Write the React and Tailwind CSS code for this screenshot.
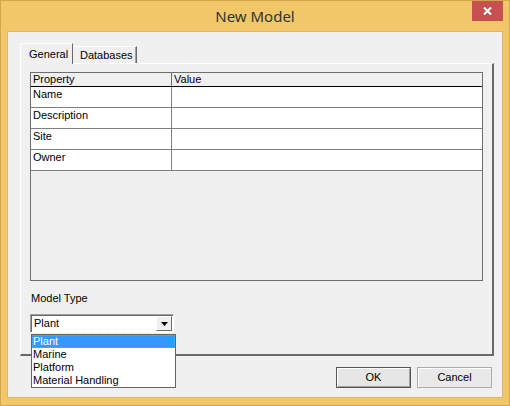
import React from "react";

const rows = ["Name", "Description", "Site", "Owner"];
const options = ["Plant", "Marine", "Platform", "Material Handling"];

const App = () => {
  return (
    <div className="w-[510px] h-[406px] bg-[#F0C86A] border border-[#D2A64E] flex flex-col font-['Liberation_Sans',Arial,sans-serif] text-[11px] leading-[13px] text-black">
      {/* title bar */}
      <div className="relative h-[30px] flex items-center justify-center">
        <span className="font-['Noto_Sans',sans-serif] text-[15px] leading-[20px] text-[#333333] mt-[-1px]">
          New Model
        </span>
        <div className="absolute top-0 right-[6px] w-[31px] h-[20px] bg-[#C75050] flex items-center justify-center">
          <svg width="9" height="8" viewBox="0 0 9 8">
            <path d="M1 0.5 L8 7.5 M8 0.5 L1 7.5" stroke="#fff" strokeWidth="2" />
          </svg>
        </div>
      </div>

      {/* client area */}
      <div className="mx-[6px] mb-[7px] flex-1 bg-[#F0F0F0] border border-[#DDB564] flex flex-col pt-[10px] pl-[12px] pr-[8px]">
        {/* tabs */}
        <div className="flex items-end h-[21px]">
          <div className="relative z-10 h-[21px] w-[53px] bg-[#F0F0F0] border-l border-t border-white border-r border-r-[#696969] rounded-tl-[2px] pl-[8px] pt-[4px] -mb-[1px]">
            General
          </div>
          <div className="h-[17px] w-[64px] border-t border-white border-r border-r-[#696969] shadow-[inset_-1px_0_0_#A0A0A0] pl-[7px] pt-[2px]">
            Databases
          </div>
        </div>

        {/* tab panel */}
        <div className="relative h-[293px] border-l border-t border-white border-r-2 border-b-2 border-r-[#696969] border-b-[#696969] pt-[8px] pl-[9px] pr-[9px]">
          {/* property grid */}
          <div className="h-[209px] border border-[#6D6D6D] bg-[#EFEFEF]">
            <div className="flex h-[14px] border-b border-black bg-[#F0F0F0]">
              <div className="w-[141px] border-r border-[#6D6D6D] pl-[2px]">Property</div>
              <div className="flex-1 pl-[2px]">Value</div>
            </div>
            {rows.map((r) => (
              <div key={r} className="flex h-[21px] border-b border-[#808080] bg-white">
                <div className="w-[141px] border-r border-[#808080] pl-[2px] pt-[1px]">{r}</div>
                <div className="flex-1" />
              </div>
            ))}
          </div>

          <div className="mt-[11px] pl-[1px]">Model Type</div>

          {/* combobox */}
          <div className="relative mt-[9px] w-[144px] h-[19px] bg-white border-t border-l border-[#A0A0A0] border-r border-b border-r-white border-b-white shadow-[inset_1px_1px_0_#696969] flex items-center">
            <span className="pl-[3px] flex-1">Plant</span>
            <div className="mr-[1px] w-[16px] h-[15px] bg-[#F0F0F0] border border-t-white border-l-white border-r-[#696969] border-b-[#696969] flex items-center justify-center">
              <svg width="7" height="4" viewBox="0 0 7 4">
                <path d="M0 0 H7 L3.5 4 Z" fill="#000" />
              </svg>
            </div>

            {/* open list */}
            <div className="absolute z-20 left-[0px] top-[19px] w-[145px] bg-white border border-[#646464]">
              {options.map((o, i) => (
                <div
                  key={o}
                  className={
                    i === 0
                      ? "h-[13px] bg-[#3399FF] text-white pl-[1px] outline-1 outline-dotted outline-[#D9922E] -outline-offset-1"
                      : "h-[13px] pl-[1px]"
                  }
                >
                  {o}
                </div>
              ))}
            </div>
          </div>
        </div>

        {/* buttons */}
        <div className="flex justify-end gap-[6px] mt-[11px] pr-[2px]">
          <button className="w-[75px] h-[21px] border border-[#555555] bg-[#E6E6E6] shadow-[inset_1px_1px_0_#fff,inset_-1px_-1px_0_#A0A0A0] text-[11px] font-['Liberation_Sans',Arial,sans-serif]">
            OK
          </button>
          <button className="w-[75px] h-[21px] border border-[#ADADAD] bg-[#E9E9E9] shadow-[inset_1px_1px_0_#fff] text-[11px] font-['Liberation_Sans',Arial,sans-serif]">
            Cancel
          </button>
        </div>
      </div>
    </div>
  );
};

export default App;
